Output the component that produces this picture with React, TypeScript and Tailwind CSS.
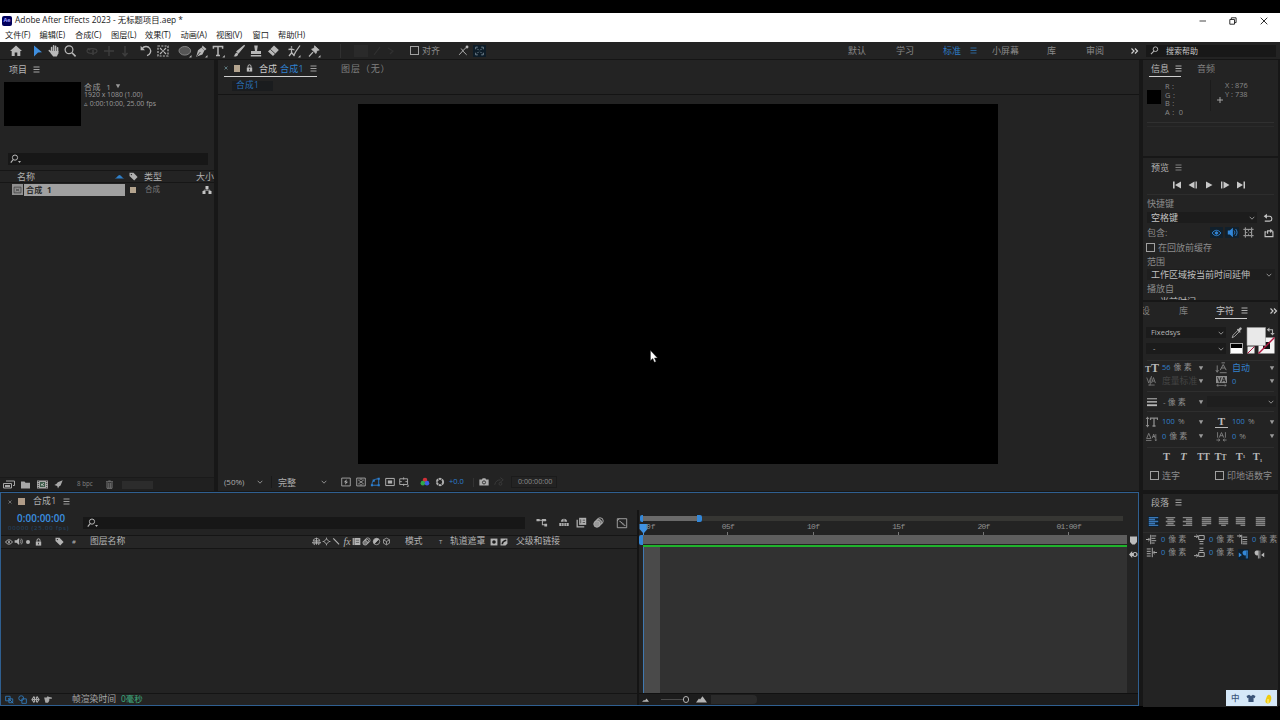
import type { ReactNode } from "react"
import clsx from "clsx"

interface IconProps {
  children: ReactNode
  className?: string
  box?: string
}

function Icon({ children, className = "w-[14px] h-[14px]", box = "0 0 14 14" }: IconProps) {
  return (
    <svg viewBox={box} className={clsx("shrink-0", className)} fill="none" stroke="currentColor" strokeWidth="1.2">
      {children}
    </svg>
  )
}

function Burger({ className }: { className?: string }) {
  return (
    <Icon className={clsx("w-[7px] h-[7px]", className)} box="0 0 7 7">
      <path d="M0.5 1h6M0.5 3.5h6M0.5 6h6" strokeWidth="0.9" />
    </Icon>
  )
}

function Chevron({ className }: { className?: string }) {
  return (
    <Icon className={clsx("w-[6px] h-[6px] text-[#9a9a9a]", className)} box="0 0 6 6">
      <path d="M0.7 1.8 3 4.2 5.3 1.8" strokeWidth="0.9" />
    </Icon>
  )
}

function Caret({ className }: { className?: string }) {
  return (
    <Icon className={clsx("w-[6px] h-[6px] text-[#9a9a9a]", className)} box="0 0 6 6">
      <path d="M0.8 1.2h4.4L3 5.2z" fill="currentColor" stroke="none" />
    </Icon>
  )
}

function Check() {
  return <div className="w-[9px] h-[9px] border border-[#a0a0a0]" />
}

function SearchIcon() {
  return (
    <Icon className="w-[11px] h-[10px] text-[#b5b5b5]" box="0 0 11 10">
      <circle cx="5" cy="3.6" r="2.6" strokeWidth="1" />
      <path d="M3.2 5.5 0.8 8.6" />
      <path d="M8 7h3L9.5 9z" fill="currentColor" stroke="none" />
    </Icon>
  )
}

function Tag({ className }: { className?: string }) {
  return (
    <Icon className={clsx("w-[9px] h-[9px]", className)} box="0 0 9 9">
      <path d="M0.5 0.8h4L8.6 5 5.2 8.6 0.5 4z" fill="currentColor" stroke="none" />
      <circle cx="2.4" cy="2.6" r="0.7" fill="#222" stroke="none" />
    </Icon>
  )
}

function Lock({ className }: { className?: string }) {
  return (
    <Icon className={clsx("w-[7px] h-[8px]", className)} box="0 0 7 8">
      <path d="M0.8 3.6h5.4v4H0.8z" fill="currentColor" stroke="none" />
      <path d="M2 3.8V2.3a1.5 1.5 0 0 1 3 0v1.5" strokeWidth="1" />
      <path d="M3.5 4.8v1.6" stroke="#222" strokeWidth="0.8" />
    </Icon>
  )
}

const MENUS = ["文件(F)", "编辑(E)", "合成(C)", "图层(L)", "效果(T)", "动画(A)", "视图(V)", "窗口", "帮助(H)"]
const MENU_W = ["w-[34.5px]", "w-[35.5px]", "w-[36px]", "w-[34px]", "w-[35.5px]", "w-[35.5px]", "w-[36.5px]", "w-[25.5px]", "w-[34px]"]

function TitleBar() {
  return (
    <div className="h-[29px] bg-white text-[#1a1a1a]">
      <div className="flex h-[15px] items-center">
        <div className="flex w-[10px] h-[10px] ml-[2px] items-center justify-center rounded-[2px] bg-[#00005b] text-[5.5px] font-bold text-[#a8a0ff]">
          Ae
        </div>
        <span className="ml-[3px] w-[1185px] text-[8.35px]">Adobe After Effects 2023 - 无标题项目.aep *</span>
        <Icon className="w-[8px] h-[8px] -ml-px" box="0 0 8 8">
          <path d="M0.5 4h6.5" strokeWidth="0.8" />
        </Icon>
        <Icon className="w-[8px] h-[8px] ml-[22px]" box="0 0 8 8">
          <path d="M0.8 2.5h4.7v4.7H0.8zM2.3 2.3V0.8h4.8v4.8H5.7" strokeWidth="0.9" />
        </Icon>
        <Icon className="w-[8px] h-[8px] ml-[23px]" box="0 0 8 8">
          <path d="M0.7 0.7 7.3 7.3M7.3 0.7 0.7 7.3" strokeWidth="0.9" />
        </Icon>
      </div>
      <div className="flex h-[14px] items-center pl-[5px] text-[8.2px]">
        {MENUS.map((menu, i) => (
          <span key={menu} className={MENU_W[i]}>
            {menu}
          </span>
        ))}
      </div>
    </div>
  )
}

function Toolbar() {
  return (
    <div className="flex h-[18px] items-center border-b border-[#151515] bg-[#232323] text-[9px] text-[#b8b8b8]">
      <Icon className="w-[14px] h-[14px] ml-[9px]">
        <path d="M7 1.5 1 7h1.7v5h3V8.6h2.6V12h3V7H13z" fill="currentColor" stroke="none" />
      </Icon>
      <Icon className="w-[14px] h-[14px] ml-[7px] text-[#3f8fe0]">
        <path d="M4 1.5 12 8.2 8 8.6 4 12.5z" fill="currentColor" stroke="none" />
      </Icon>
      <Icon className="w-[14px] h-[14px] ml-[3px]">
        <path
          d="M4.6 8V3.4M6.6 7V1.8M8.6 7V2.2M10.6 8V3.8M4.8 9 2.3 6.6"
          strokeWidth="1.5"
          strokeLinecap="round"
        />
        <path d="M3.8 7h7.6v2.2L9.8 12.6H6.2L3.8 9.6z" fill="currentColor" stroke="none" />
      </Icon>
      <Icon className="w-[14px] h-[14px] ml-[2px]">
        <circle cx="6" cy="5.8" r="3.9" />
        <path d="m9 8.8 3.6 3.6" strokeWidth="1.6" />
      </Icon>
      <Icon className="w-[14px] h-[14px] ml-[8px] text-[#3e3e3e]">
        <ellipse cx="7" cy="7" rx="5" ry="2.4" />
        <path d="M8 6v5M2.5 4.5 5 6" strokeWidth="1.6" />
      </Icon>
      <Icon className="w-[14px] h-[14px] ml-[3px] text-[#3e3e3e]">
        <path d="M7 2v10M2 7h10" strokeWidth="1.4" />
      </Icon>
      <Icon className="w-[14px] h-[14px] ml-[2px] text-[#3e3e3e]">
        <path d="M7 2v9M4.5 9 7 12l2.5-3" strokeWidth="1.4" />
      </Icon>
      <Icon className="w-[14px] h-[14px] ml-[7px]">
        <path d="M3.2 4.6A4.6 4.6 0 1 1 8 11.6" strokeWidth="1.3" />
        <path d="M1.6 1.8v4.5h4.4z" fill="currentColor" stroke="none" />
      </Icon>
      <Icon className="w-[14px] h-[14px] ml-[3px]">
        <path d="M2 2h10v10H2z" strokeDasharray="2 1.3" />
        <path d="M4 4l2 2M10 4 8 6M4 10l2-2M10 10 8 8" strokeWidth="1.1" />
        <circle cx="7" cy="7" r="1" fill="currentColor" stroke="none" />
      </Icon>
      <Icon className="w-[14px] h-[14px] ml-[8px]">
        <ellipse cx="6.8" cy="6.8" rx="5.8" ry="4.3" fill="#555" stroke="#8a8a8a" strokeWidth="0.9" />
        <path d="M13.5 11v2.5H11z" fill="currentColor" stroke="none" />
      </Icon>
      <Icon className="w-[14px] h-[14px] ml-[2px]">
        <path d="M8.5 1.5 12.5 5l-1.7 1.4-2.9-3zM7.5 3.6 10.4 6.6 8.4 10.6 2.2 12.8 4 6.3z" fill="currentColor" stroke="none" />
        <path d="m3 12 3.4-4" stroke="#232323" strokeWidth="0.8" />
        <path d="M13.5 11v2.5H11z" fill="currentColor" stroke="none" />
      </Icon>
      <Icon className="w-[14px] h-[14px] ml-[3px]">
        <path d="M2.4 4.8V2.4h9.2v2.4M7 2.4v9M5 11.6h4" strokeWidth="1.5" />
        <path d="M13.8 11v2.5h-2.5z" fill="currentColor" stroke="none" />
      </Icon>
      <Icon className="w-[14px] h-[14px] ml-[7px]">
        <path d="M12.6 1.3 6.4 8.8 5 7.6z" fill="currentColor" />
        <path d="M1.5 12.3c1.4-.4 1-2.6 2.6-3.4 1.4-.4 2.4.8 1.8 2-.8 1.5-2.8 1.7-4.4 1.4z" fill="currentColor" stroke="none" />
      </Icon>
      <Icon className="w-[14px] h-[14px] ml-[3px]">
        <path d="M5.2 1.5h3.6L8 7h4v3H2V7h4zM1.8 11h10.4v1.4H1.8z" fill="currentColor" stroke="none" />
      </Icon>
      <Icon className="w-[14px] h-[14px] ml-[3px]">
        <path d="M8 1.5 12.8 6 7 12 2 7.5z" fill="currentColor" stroke="none" />
        <path d="m4.3 5.3 5 4.6" stroke="#232323" strokeWidth="0.8" />
      </Icon>
      <Icon className="w-[14px] h-[14px] ml-[7px]">
        <path d="M13 1.5 8.5 8l-1.5 3M4.5 2.2v1.6M1.5 5.5l3-.5 3 1M4.5 5v4L2 12M4.5 8.5l3 3.5" strokeWidth="1.3" />
        <path d="M13.5 11v2.5H11z" fill="currentColor" stroke="none" />
      </Icon>
      <Icon className="w-[14px] h-[14px] ml-[6px]">
        <path d="M7.6 1.8 12.2 6l-2.2.5-1 3-4.4-4.2 2.6-1z" fill="currentColor" strokeWidth="0.8" />
        <path d="M6 8.2 2 12.5" />
        <path d="M13.5 11v2.5H11z" fill="currentColor" stroke="none" />
      </Icon>
      <div className="ml-[19px] h-[14px] w-px bg-[#303030]" />
      <div className="ml-[13px] h-[12px] w-[14px] bg-[#2a2a2a]" />
      <Icon className="w-[24px] h-[12px] ml-[4px] text-[#303030]" box="0 0 24 12">
        <path d="M2 10 8 2M16 3l5 3-3 3" />
      </Icon>
      <div className="ml-[14px]">
        <Check />
      </div>
      <span className="ml-[3px] w-[36px] text-[#8c8c8c]">对齐</span>
      <Icon className="w-[11px] h-[11px]">
        <path d="m1.5 12.5 4.5-5 5 5M6 7.5l4.5-4.5M4 4.5l2.5 3" strokeWidth="1.2" />
        <circle cx="11.5" cy="2.5" r="1.8" fill="currentColor" stroke="none" />
      </Icon>
      <div className="ml-[4px] w-[13px] h-[12px] bg-[#0d1c28]">
        <Icon className="w-[13px] h-[12px] text-[#7e909c]">
          <path d="M2.5 5V2.5H5M9 2.5h2.5V5M11.5 9v2.5H9M5 11.5H2.5V9M4.5 4.5l1.5 1.5M9.5 4.5 8 6M4.5 9.5 6 8M9.5 9.5 8 8" strokeWidth="1" />
        </Icon>
      </div>
      <div className="flex items-center ml-[362px] text-[#8a8a8a]">
        <span className="w-[48px]">默认</span>
        <span className="w-[47px]">学习</span>
        <span className="w-[27px] text-[#2d7bc4]">标准</span>
        <Burger className="mr-[15px] text-[#2d6ba4]" />
        <span className="w-[55px]">小屏幕</span>
        <span className="w-[39px]">库</span>
        <span className="w-[44px]">审阅</span>
      </div>
      <Icon className="w-[9px] h-[8px] text-[#d0d0d0]" box="0 0 9 8">
        <path d="M1.5 1.5l2.5 2.5-2.5 2.5M5 1.5l2.5 2.5-2.5 2.5" strokeWidth="1.2" />
      </Icon>
      <div className="ml-[7px] flex h-[12px] w-[130px] items-center bg-[#181818] pl-[4px]">
        <Icon className="w-[9px] h-[9px]">
          <circle cx="8.5" cy="5" r="3.6" strokeWidth="1.5" />
          <path d="M6 7.8 1.5 12.5" strokeWidth="1.7" />
        </Icon>
        <span className="ml-[7px] text-[8px] text-[#c4c4c4]">搜索帮助</span>
      </div>
    </div>
  )
}

function ProjectPanel() {
  return (
    <div className="flex w-[214px] flex-col bg-[#232323]">
      <div className="flex h-[18px] items-center pl-[9px] text-[#b4b4b4]">
        <span className="w-[24px] text-[9px]">项目</span>
        <Burger />
      </div>
      <div className="mt-[4px] flex pl-[4px]">
        <div className="h-[44px] w-[77px] bg-black" />
        <div className="ml-[3px] text-[6.95px] leading-[9px] text-[#9a9a9a]">
          <div className="flex h-[8px] items-center">
            <span className="text-[8px] tracking-[0.5px]">合成&nbsp; 1</span>
            <Caret className="ml-[4px]" />
          </div>
          <div>1920 x 1080 (1.00)</div>
          <div>▵ 0:00:10:00, 25.00 fps</div>
        </div>
      </div>
      <div className="mt-[27px] ml-[8px] flex h-[12px] w-[200px] items-center bg-[#171717] pl-[2px]">
        <SearchIcon />
      </div>
      <div className="mt-[5px] flex h-[13px] items-center border-y border-[#161616] pl-[17px] text-[9px] text-[#b0b0b0]">
        <span className="w-[97px]">名称</span>
        <Icon className="w-[11px] h-[5px] text-[#2f7fc8]" box="0 0 11 5">
          <path d="M0.5 4.5C3 4 4 1 5.5 1S8 4 10.5 4.5z" fill="currentColor" stroke="none" />
        </Icon>
        <Tag className="ml-[4px]" />
        <span className="ml-[6px] w-[52px]">类型</span>
        <span>大小</span>
      </div>
      <div className="flex h-[13px] items-center pl-[12px] text-[8px]">
        <div className="flex h-[11px] w-[11px] items-center justify-center bg-[#909090]">
          <Icon className="w-[9px] h-[8px] text-[#333]">
            <path d="M1 2h12v10H1zM4 5l6 4M10 5 4 9" />
          </Icon>
        </div>
        <div className="ml-px flex h-[12px] w-[101px] items-center bg-[#a0a0a0] pl-[2px] font-bold tracking-[0.2px] text-[#2a2a2a]">
          合成&nbsp; 1
        </div>
        <div className="ml-[5px] h-[6px] w-[6px] bg-[#b4a48e]" />
        <span className="ml-[9px] w-[57px] text-[7.5px] text-[#7c7c7c]">合成</span>
        <Icon className="w-[10px] h-[10px] text-[#c4c4c4]" box="0 0 10 10">
          <path d="M3.5 1h3v3h-3zM0.5 6h3v3h-3zM6.5 6h3v3h-3z" fill="currentColor" stroke="none" />
          <path d="M5 4v1.2M2 6V5.2h6V6" strokeWidth="0.8" />
        </Icon>
      </div>
      <div className="flex-1" />
      <div className="flex h-[14px] items-center border-t border-[#1a1a1a] bg-[#202020] pl-[3px] text-[#a8a8a8]">
        <Icon className="w-[12px] h-[9px]" box="0 0 12 9">
          <path d="M0.5 3.5h8v4.5h-8zM3 1h8.5v4.5H10" strokeWidth="1" />
          <path d="M2 5h5v2H2z" fill="currentColor" stroke="none" />
        </Icon>
        <Icon className="ml-[6px] w-[9px] h-[8px]" box="0 0 9 8">
          <path d="M0 0.5h3.5l1 1.3H9v5.7H0z" fill="currentColor" stroke="none" />
        </Icon>
        <Icon className="ml-[7px] w-[11px] h-[9px]" box="0 0 11 9">
          <path d="M0 0.5h11v8H0z" fill="currentColor" stroke="none" />
          <path d="M3 2h5v5H3z" fill="#3a5a48" stroke="none" />
          <path d="M1.3 1v7M9.7 1v7" stroke="#232323" strokeWidth="0.8" strokeDasharray="1 1" />
          <path d="M4 4l3 2M7 3 4 5.5" stroke="#ddd" strokeWidth="0.7" />
        </Icon>
        <Icon className="ml-[6px] w-[9px] h-[9px]" box="0 0 9 9">
          <path d="M8.7 0.3 6.6 5.6 5 6.4 4 8.6 3.2 6 0.4 5l2.2-1.2 1.2-1.6z" fill="currentColor" stroke="none" />
        </Icon>
        <span className="ml-[14px] w-[29px] text-[6.2px] text-[#808080]">8 bpc</span>
        <Icon className="w-[7px] h-[9px] text-[#777]" box="0 0 7 9">
          <path d="M0 1.8h7M2.3 1h2.4M1 2.5v5.8h5V2.5M2.8 3v5M4.3 3v5" strokeWidth="1" />
        </Icon>
        <div className="ml-[9px] h-[8px] w-[31px] bg-[#2c2c2c]" />
      </div>
    </div>
  )
}

function ViewerFooter() {
  return (
    <div className="flex h-[16px] items-center pl-[6px] text-[#adadad]">
      <span className="w-[33px] text-[8px]">(50%)</span>
      <Chevron />
      <div className="ml-[8px] h-[12px] w-px bg-[#191919]" />
      <span className="ml-[6px] w-[43px] text-[9px]">完整</span>
      <Chevron />
      <Icon className="ml-[14px] w-[10px] h-[10px]">
        <path d="M1 1.5h12v11H1z" strokeWidth="1.2" />
        <path d="M8 3 4 7.5h2.5L5.5 11 10 6.5H7.5z" fill="currentColor" stroke="none" />
      </Icon>
      <Icon className="ml-[5px] w-[10px] h-[10px]">
        <path d="M1 1.5h12v11H1z" strokeWidth="1.2" />
        <path d="m3 4 8 6M11 4l-8 6M5 3l4 0M5 11h4" strokeWidth="1.1" />
      </Icon>
      <Icon className="ml-[4px] w-[11px] h-[10px] text-[#2d7fd0]">
        <path d="M2 11.5C2 6 5 2.5 11.5 2.5v9z" strokeWidth="1.3" />
        <path d="M10 1h3v3h-3zM0.5 10h3v3h-3zM10 10h3v3h-3zM3 3.5h3v3H3z" fill="currentColor" stroke="none" />
      </Icon>
      <Icon className="ml-[4px] w-[10px] h-[10px]">
        <path d="M1 2h12v10H1z" strokeWidth="1.4" />
        <path d="M4 4.8h6v4.4H4z" fill="currentColor" stroke="none" />
      </Icon>
      <Icon className="ml-[4px] w-[10px] h-[10px]">
        <path d="M1 2.5h11v8H1zM6.5 0.5v3M6.5 9.5v3M1 6.5h3M9 6.5h3" strokeWidth="1.3" />
        <path d="M13.5 10.5v3h-3z" fill="currentColor" stroke="none" />
      </Icon>
      <Icon className="ml-[11px] w-[10px] h-[10px]">
        <circle cx="7" cy="4.2" r="3.2" fill="#d03038" stroke="none" />
        <circle cx="4" cy="8.6" r="3.2" fill="#2fa848" stroke="none" />
        <circle cx="9.8" cy="8.6" r="3.2" fill="#3c5ee0" stroke="none" />
      </Icon>
      <Icon className="ml-[5px] w-[10px] h-[10px]">
        <circle cx="7" cy="7" r="4.4" strokeWidth="2.8" strokeDasharray="3.8 0.8" />
      </Icon>
      <span className="ml-[4px] w-[24px] text-[7.5px] text-[#2d7fd0]">+0.0</span>
      <div className="h-[9px] w-px bg-[#333]" />
      <Icon className="ml-[5px] w-[10px] h-[10px]">
        <path d="M0.5 3.5h3.6l1-1.8h3.8l1 1.8h3.6v8.5H0.5z" fill="currentColor" stroke="none" />
        <circle cx="7" cy="7.6" r="2.2" stroke="#232323" />
      </Icon>
      <Icon className="ml-[5px] w-[10px] h-[10px] text-[#3d3d3d]">
        <path d="M1 11c1-5 4-7 8-7M9 1l4 3-4 3" />
        <circle cx="9" cy="9.5" r="2" />
      </Icon>
      <div className="ml-[7px] flex h-[12px] w-[46px] items-center border border-[#1b1b1b] pl-[6px] text-[7.2px] text-[#8c8c8c]">
        0:00:00:00
      </div>
    </div>
  )
}

function CompPanel() {
  return (
    <div className="flex w-[921px] flex-col bg-[#232323]">
      <div className="flex h-[17px] pl-[6px] text-[9px]">
        <div className="flex w-[93px] items-center border-b border-[#cfcfcf]">
          <Icon className="w-[4px] h-[4px] text-[#6a8a90]" box="0 0 4 4">
            <path d="M0.5 0.5l3 3M3.5 0.5l-3 3" strokeWidth="0.8" />
          </Icon>
          <div className="ml-[6px] h-[7px] w-[7px] bg-[#b4a48e]" />
          <Lock className="ml-[6px] text-[#bcbcbc]" />
          <span className="ml-[6px] w-[21px] text-[#cacaca]">合成</span>
          <span className="w-[30px] tracking-[0.3px] text-[#2f80d0]">合成1</span>
          <Burger className="text-[#adadad]" />
        </div>
        <div className="ml-[24px] flex items-center tracking-[0.9px] text-[#808080]">图层（无）</div>
      </div>
      <div className="flex h-[18px] items-center border-b border-[#141414] pl-[14px]">
        <div className="flex h-[10px] w-[41px] items-center bg-[#1a1c1e] pl-[4px] text-[8.6px] tracking-[0.4px] text-[#2a6fb4]">合成1</div>
      </div>
      <div className="flex h-[379px] pl-[140px] pt-[9px]">
        <div className="h-[360px] w-[640px] bg-black" />
      </div>
      <ViewerFooter />
    </div>
  )
}

function TimelineHeader() {
  return (
    <div className="flex h-[14px] items-center border-y border-[#151515] bg-[#262626] pb-px pl-[4px] text-[#b4b4b4]">
      <Icon className="w-[8px] h-[8px]">
        <path d="M1 7c3-5 9-5 12 0-3 5-9 5-12 0z" strokeWidth="1.6" />
        <circle cx="7" cy="7" r="1.8" fill="currentColor" stroke="none" />
      </Icon>
      <Icon className="ml-[1px] w-[9px] h-[9px]">
        <path d="M1 5h3l4-3.5v11L4 9H1z" fill="currentColor" stroke="none" />
        <path d="M9.5 4c1.6 2 1.6 4 0 6M11.2 2.5c2.6 3 2.6 6 0 9" />
      </Icon>
      <div className="ml-[3px] h-[4px] w-[4px] rounded-full bg-[#b4b4b4]" />
      <Lock className="ml-[5px]" />
      <Tag className="ml-[13px]" />
      <span className="ml-[8px] w-[18px] text-[6px]">#</span>
      <span className="w-[222px] text-[8.8px]">图层名称</span>
      <Icon className="w-[9px] h-[9px]">
        <path d="M2 6c0-5 10-5 10 0zM1 8h12v1.5H1zM3.5 10v2.5M10.5 10v2.5M7 1v11" strokeWidth="1.4" />
      </Icon>
      <Icon className="ml-[1px] w-[9px] h-[9px]">
        <path d="m7 3 4 4-4 4-4-4zM7 1v2M7 11v2M1 7h2M11 7h2" strokeWidth="1.4" />
      </Icon>
      <Icon className="ml-[1px] w-[9px] h-[9px]">
        <path d="m2 2 9 9.5" strokeWidth="1.7" />
      </Icon>
      <span className="ml-[2px] w-[8px] text-center font-['Liberation_Serif'] text-[10px] italic">fx</span>
      <Icon className="w-[9px] h-[9px] ml-px">
        <path d="M1 1.5h12v11H1z" fill="currentColor" stroke="none" />
        <path d="M3.5 1.5v11M6 5h5M6 8.5h5" stroke="#444" strokeWidth="1" />
      </Icon>
      <Icon className="ml-[1px] w-[9px] h-[9px]">
        <circle cx="9" cy="5" r="3.6" />
        <circle cx="7" cy="7" r="3.6" />
        <circle cx="5" cy="9" r="3.6" fill="#777" />
      </Icon>
      <Icon className="ml-[1px] w-[9px] h-[9px]">
        <circle cx="7" cy="7" r="5" />
        <path d="M3.5 10.5 10.5 3.5A5 5 0 0 0 3.5 10.5z" fill="currentColor" />
      </Icon>
      <Icon className="ml-[1px] w-[9px] h-[9px]">
        <path d="m7 1.8 4.6 2.4v5.4L7 12.2 2.4 9.6V4.2zM2.4 4.4 7 7l4.6-2.6M7 7v5" />
      </Icon>
      <span className="ml-[14px] w-[34px] text-[8.8px]">模式</span>
      <span className="w-[11px] text-[6px]">T</span>
      <span className="w-[40px] text-[8.8px]">轨道遮罩</span>
      <Icon className="w-[8px] h-[8px]">
        <path d="M1 1h12v12H1z" fill="currentColor" stroke="none" />
        <circle cx="7" cy="7" r="3.2" fill="#1c1c1c" stroke="none" />
      </Icon>
      <Icon className="ml-[2px] w-[8px] h-[8px]">
        <path d="M1 1h12v9L9.5 13H1z" fill="currentColor" stroke="none" />
        <path d="M4 11C4 7 7 5 11 4" stroke="#1c1c1c" strokeWidth="3" />
      </Icon>
      <span className="ml-[8px] text-[8.8px]">父级和链接</span>
    </div>
  )
}

const TICKS = ["05f", "10f", "15f", "20f", "01:00f"]

function TimelineTrack() {
  return (
    <div className="flex w-[501px] flex-col border-l-2 border-[#141414]">
      <div className="mt-[5px] flex h-[7px] items-center pl-px">
        <div className="h-[7px] w-[3px] rounded-l-[2px] bg-[#3387d8]" />
        <div className="h-[5px] w-[54px] bg-[#6a6a6a]" />
        <div className="h-[7px] w-[5px] rounded-r-[2px] bg-[#3387d8]" />
        <div className="h-[5px] w-[421px] bg-[#363633]" />
      </div>
      {/* ruler */}
      <div className="flex h-[13px] pl-px font-['Liberation_Mono'] text-[8px] leading-[7px] text-[#909090]">
        <div className="flex w-[45.4px]">
          <Icon className="mt-[1px] -ml-[1px] w-[9px] h-[12px] text-[#3f92e4]" box="0 0 9 12">
            <path d="M0.5 1h8v5L5 10v2H4v-2L0.5 6z" fill="currentColor" stroke="none" />
          </Icon>
          <span className="-ml-[2px] mt-px">0f</span>
        </div>
        {TICKS.map((tick) => (
          <div key={tick} className="flex w-[85.2px] flex-col items-center">
            <span className="mt-px tracking-[-0.7px]">{tick}</span>
            <div className="mt-[2px] h-[3px] w-px bg-[#777]" />
          </div>
        ))}
      </div>
      <div className="flex flex-1">
        <div className="w-[488px]">
          <div className="flex h-[10px] items-start">
            <div className="h-[10px] w-[4px] rounded-l-[2px] bg-[#3387d8]" />
            <div className="h-[9px] w-[484px] bg-[#5e5e5e]" />
          </div>
          <div className="ml-[4px] h-[2px] bg-[#1fb32c]" />
          <div className="ml-[4px] flex h-[146px] border-l border-[#3f78b0] bg-[#313131]">
            <div className="h-full w-[16px] bg-[#4a4a4a]" />
          </div>
        </div>
        <div className="flex flex-col pl-[2px] pt-[1px] text-[#bcbcbc]">
          <Icon className="w-[9px] h-[9px]" box="0 0 9 9">
            <path d="M1 0.5h7v5.5L5.8 8.5H3.2L1 6z" fill="currentColor" stroke="none" />
          </Icon>
          <Icon className="mt-[5px] w-[9px] h-[9px]" box="0 0 9 9">
            <path d="M0 4.5 3.2 1v2h1.5v3H3.2v2z" fill="currentColor" stroke="none" />
            <circle cx="6" cy="4.5" r="2" strokeWidth="1.2" />
          </Icon>
        </div>
      </div>
      <div className="flex h-[13px] items-center border-t border-[#111] bg-[#1c1c1c] pl-[3px] text-[#b4b4b4]">
        <Icon className="w-[7px] h-[4px]" box="0 0 7 4">
          <path d="M0 3.8 2 2l1 .6L4.5.5 7 3.8z" fill="currentColor" stroke="none" />
        </Icon>
        <div className="ml-[12px] h-px w-[22px] bg-[#4a4a4a]" />
        <div className="h-[7px] w-[6px] rounded-full border border-[#b4b4b4]" />
        <Icon className="ml-[7px] w-[11px] h-[7px]" box="0 0 11 7">
          <path d="M0 6.5 3 2.5l1 1L6.5.3 11 6.5z" fill="currentColor" stroke="none" />
        </Icon>
        <div className="ml-[4px] h-[9px] w-[46px] rounded-r-[4px] bg-[#2a2a2a]" />
      </div>
    </div>
  )
}

function Timeline() {
  return (
    <div className="flex h-[214px] w-[1139px] flex-col border border-[#2f5f90] bg-[#232323]">
      <div className="flex h-[17px] items-center pl-[7px] text-[#b0b0b0]">
        <Icon className="w-[4px] h-[4px] text-[#808080]" box="0 0 4 4">
          <path d="M0.5 0.5l3 3M3.5 0.5l-3 3" strokeWidth="0.8" />
        </Icon>
        <div className="ml-[6px] h-[7px] w-[7px] bg-[#b09c88]" />
        <span className="ml-[8px] w-[30px] text-[8.8px] tracking-[0.3px]">合成1</span>
        <Burger />
      </div>
      <div className="flex h-[195px]">
        <div className="flex w-[636px] flex-col">
          <div className="flex h-[25px]">
            <div className="w-[82px] pt-[2px]">
              <div className="pl-[16px] font-['Open_Sans'] text-[9.8px] font-semibold leading-[13px] tracking-[0.1px] text-[#3a90e0]">0:00:00:00</div>
              <div className="pl-[7px] text-[6px] leading-[6px] tracking-[0.8px] text-[#23486a]">00000 (25.00 fps)</div>
            </div>
            <div className="mt-[7px] flex h-[12px] w-[442px] items-center bg-[#171717] pl-[4px]">
              <SearchIcon />
            </div>
            <div className="flex h-[25px] items-center pl-[11px] text-[#b0b0b0]">
              <Icon className="w-[12px] h-[11px]">
                <path d="M0.5 4h6M6.5 4h6M7.5 4v6h5" strokeWidth="1.3" />
                <path d="M0 2.5h4v3H0zM7 2.5h5v3H7zM10 8.5h3.5v3.5H10z" fill="currentColor" stroke="none" />
              </Icon>
              <Icon className="ml-[10px] w-[12px] h-[11px]">
                <path d="M3 6c0-5 8-5 8 0zM1 7.5h12v4H1z" fill="currentColor" stroke="none" />
                <path d="M7 2v10M4 8v3M10 8v3" stroke="#232323" strokeWidth="0.9" />
              </Icon>
              <Icon className="ml-[6px] w-[11px] h-[11px]">
                <path d="M4 1h9v9H4z" fill="currentColor" stroke="none" />
                <path d="M1.5 3.5v9h9" strokeWidth="1.6" />
                <path d="M6 3v5M8.5 4h3M8.5 7h3" stroke="#333" strokeWidth="0.9" />
              </Icon>
              <Icon className="ml-[6px] w-[11px] h-[11px]">
                <circle cx="9" cy="5" r="4" />
                <circle cx="7" cy="7" r="4" fill="#777" />
                <circle cx="5" cy="9" r="4" fill="#999" />
              </Icon>
              <Icon className="ml-[12px] w-[12px] h-[12px]">
                <path d="M1.5 2h11v10.5h-11zM1.5 4.5 4 2" strokeWidth="1" />
                <path d="M4 5c3 0 3 5 7 5M7 6.5l2 2" strokeWidth="1" />
              </Icon>
            </div>
          </div>
          <TimelineHeader />
          <div className="flex-1" />
          <div className="flex h-[12px] items-center border-t border-[#141414] pl-[4px] text-[#a8a8a8]">
            <Icon className="w-[9px] h-[9px] text-[#3078b8]">
              <path d="M1 2h7v7H1zM5 5l8 8M6 6h6v6H6z" strokeWidth="1.4" />
            </Icon>
            <Icon className="ml-[4px] w-[9px] h-[9px] text-[#3078b8]">
              <circle cx="5" cy="5" r="3.8" strokeWidth="1.4" />
              <path d="M6 6h7v7H6z" strokeWidth="1.4" />
            </Icon>
            <Icon className="ml-[4px] w-[9px] h-[9px]">
              <path d="M5 2 1.5 7 5 12M9 2l3.5 5L9 12M5.5 3v8M8.5 3v8M2 7h10" strokeWidth="1.8" />
            </Icon>
            <Icon className="ml-[3px] w-[10px] h-[9px]">
              <path d="M1 4h4l1-2 3 1 4 1v2H9v3l-2 3H3z" fill="currentColor" stroke="none" />
            </Icon>
            <span className="ml-[19px] w-[49px] text-[8.8px]">帧渲染时间</span>
            <span className="text-[8.4px] text-[#3fae80]">0毫秒</span>
          </div>
        </div>
        <TimelineTrack />
      </div>
    </div>
  )
}

function InfoPanel() {
  return (
    <div className="flex h-[96px] flex-col bg-[#232323]">
      <div className="flex h-[17px] pl-[6px] text-[9px]">
        <div className="flex w-[32px] items-center border-b border-[#cfcfcf] pl-[2px] text-[#bcbcbc]">
          <span className="w-[24px]">信息</span>
          <Burger className="w-[6px]" />
        </div>
        <span className="ml-[16px] flex items-center text-[#808080]">音频</span>
      </div>
      <div className="flex h-[45px] items-start pl-[4px] text-[7.4px] leading-[8.7px] text-[#8a8a8a]">
        <div className="mt-[13px] h-[14px] w-[14px] bg-black" />
        <div className="ml-[4px] w-[45px] pt-[5px] tracking-[0.3px]">
          <div>R :</div>
          <div>G :</div>
          <div>B :</div>
          <div>A : &nbsp;0</div>
        </div>
        <div className="mt-[3px] h-[31px] w-px bg-[#1b1b1b]" />
        <Icon className="ml-[6px] mt-[20px] w-[6px] h-[6px] text-[#b0b0b0]" box="0 0 6 6">
          <path d="M3 0v6M0 3h6" strokeWidth="0.9" />
        </Icon>
        <div className="ml-[2px] pt-[4px]">
          <div>X : 876</div>
          <div>Y : 738</div>
        </div>
      </div>
      <div className="mx-[4px] h-px bg-[#303030]" />
      <div className="mx-[4px] mt-[3px] h-px bg-[#2a2a2a]" />
    </div>
  )
}

function PreviewPanel() {
  return (
    <div className="mt-[2px] flex h-[142px] flex-col overflow-hidden bg-[#232323] text-[9px] text-[#8c8c8c] [&>div]:shrink-0">
      <div className="flex h-[18px] items-center pl-[8px] text-[#b4b4b4]">
        <span className="w-[24px]">预览</span>
        <Burger className="w-[6px] text-[#888]" />
      </div>
      <div className="mx-[4px] flex h-[19px] items-center border-b border-[#2d2d2d] pl-[25px] text-[#c8c8c8]">
        <Icon className="w-[10px] h-[8px]" box="0 0 10 8">
          <path d="M1 0.5h1.6v7H1zM9 0.5v7L3 4z" fill="currentColor" stroke="none" />
        </Icon>
        <Icon className="ml-[6px] w-[10px] h-[8px]" box="0 0 10 8">
          <path d="M7.5 0.5h1.4v7H7.5zM6.5 0.5v7L0.5 4z" fill="currentColor" stroke="none" />
        </Icon>
        <Icon className="ml-[6px] w-[10px] h-[8px]" box="0 0 10 8">
          <path d="M2 0.5v7L8.5 4z" fill="currentColor" stroke="none" />
        </Icon>
        <Icon className="ml-[6px] w-[10px] h-[8px]" box="0 0 10 8">
          <path d="M1 0.5h1.4v7H1zM3.5 0.5v7l6-3.5z" fill="currentColor" stroke="none" />
        </Icon>
        <Icon className="ml-[6px] w-[10px] h-[8px]" box="0 0 10 8">
          <path d="M7.5 0.5H9v7H7.5zM1 0.5v7L7 4z" fill="currentColor" stroke="none" />
        </Icon>
      </div>
      <div className="flex h-[16px] items-center pl-[4px]">快捷键</div>
      <div className="flex h-[13px] items-center pl-[4px] text-[#c4c4c4]">
        <div className="flex h-[11px] w-[110px] items-center bg-[#1c1c1c] pl-[4px]">
          <span className="w-[98px]">空格键</span>
          <Chevron />
        </div>
        <Icon className="ml-[6px] w-[10px] h-[10px]">
          <path d="M4 4.5h5a3.3 3.3 0 0 1 0 6.8H2.5" strokeWidth="1.6" />
          <path d="M5.5 1v7L1 4.5z" fill="currentColor" stroke="none" />
        </Icon>
      </div>
      <div className="flex h-[17px] items-center pl-[4px]">
        <span className="w-[63px]">包含:</span>
        <div className="flex h-[11px] w-[13px] items-center justify-center bg-[#11202c] text-[#3387d8]">
          <Icon className="w-[11px] h-[10px]">
            <path d="M1 7c3-5 9-5 12 0-3 5-9 5-12 0z" strokeWidth="1.3" />
            <circle cx="7" cy="7" r="1.8" fill="currentColor" />
          </Icon>
        </div>
        <div className="ml-[2px] flex h-[11px] w-[14px] items-center justify-center bg-[#11202c] text-[#3387d8]">
          <Icon className="w-[13px] h-[11px]">
            <path d="M1 4.5h2.5L7.5 1v12L3.5 9.5H1z" fill="currentColor" stroke="none" />
            <path d="M9 4.5c1.2 1.6 1.2 3.4 0 5M11 2.5c2.4 3 2.4 6 0 9" />
          </Icon>
        </div>
        <Icon className="ml-[4px] w-[11px] h-[11px] text-[#b4b4b4]">
          <path d="M3 3h8v8H3zM3 0.5v2M11 0.5v2M3 11.5v2M11 11.5v2M0.5 3h2M0.5 11h2M11.5 3h2M11.5 11h2" strokeWidth="1.2" />
          <path d="M7 4v1.5M7 8.5V10M4 7h1.5M8.5 7H10" strokeWidth="1" />
        </Icon>
        <Icon className="ml-[10px] w-[10px] h-[10px] text-[#c0c0c0]">
          <path d="M3.5 5.5H1.5v6.5h11V5.5H11M5 8V4h5" strokeWidth="1.6" />
          <path d="M8.5 1v6L12.5 4z" fill="currentColor" stroke="none" />
        </Icon>
      </div>
      <div className="flex h-[13px] items-center pl-[3px]">
        <Check />
        <span className="ml-[3px]">在回放前缓存</span>
      </div>
      <div className="flex h-[14px] items-center pl-[4px]">范围</div>
      <div className="flex h-[13px] items-center pl-[4px]">
        <div className="flex h-[11px] w-[128px] items-center bg-[#1e1e1e] pl-[4px] text-[#c0c0c0]">
          <span className="w-[115px]">工作区域按当前时间延伸</span>
          <Chevron />
        </div>
      </div>
      <div className="flex h-[14px] items-center pl-[4px]">播放自</div>
      <div className="ml-[17px] mt-[2px] h-[9px] leading-[9px] text-[#c0c0c0]">当前时间</div>
    </div>
  )
}

function CharRow({ icons, left, right, className }: { icons: [ReactNode, ReactNode]; left: ReactNode; right: ReactNode; className: string }) {
  return (
    <div className={clsx("flex items-center pl-[2px] text-[8px] text-[#8c8c8c]", className)}>
      {icons[0]}
      <div className="ml-[4px] w-[36px]">{left}</div>
      <Caret />
      <div className="ml-[11px] flex items-center">{icons[1]}</div>
      <div className="ml-[4px] w-[37px] whitespace-nowrap">{right}</div>
      <Caret />
    </div>
  )
}

function Num({ children }: { children: ReactNode }) {
  return <span className="mr-[3px] text-[7.5px] text-[#3280cc]">{children}</span>
}

function Glyph({ children, className }: { children: ReactNode; className?: string }) {
  return <span className={clsx("block w-[13px] text-center font-['Liberation_Serif'] font-bold leading-none text-[#b8b8b8]", className)}>{children}</span>
}

function CharacterPanel() {
  return (
    <div className="mt-[2px] flex h-[188px] flex-col bg-[#232323] text-[#b0b0b0] [&>div]:shrink-0">
      <div className="flex h-[17px] overflow-hidden text-[9px]">
        <span className="-ml-[2px] flex w-[38px] items-center text-[#808080]">设</span>
        <span className="flex w-[36px] items-center text-[#808080]">库</span>
        <div className="flex w-[32px] items-center border-b border-[#cfcfcf] pl-px text-[#c0c0c0]">
          <span className="w-[25px]">字符</span>
          <Burger className="w-[6px]" />
        </div>
        <Icon className="ml-[22px] mt-[5px] w-[9px] h-[8px] text-[#c8c8c8]" box="0 0 9 8">
          <path d="M1.5 1.5l2.5 2.5-2.5 2.5M5 1.5l2.5 2.5-2.5 2.5" strokeWidth="1.2" />
        </Icon>
      </div>
      <div className="flex h-[41px] pl-[3px] pt-[8px]">
        <div className="w-[80px] text-[7.5px]">
          <div className="flex h-[11px] items-center bg-[#1b1b1b] pl-[5px] text-[#b4b4b4]">
            <span className="w-[67px]">Fixedsys</span>
            <Chevron />
          </div>
          <div className="mt-[5px] flex h-[11px] items-center bg-[#1b1b1b] pl-[7px]">
            <span className="w-[65px]">-</span>
            <Chevron />
          </div>
        </div>
        <div className="ml-[4px] w-[13px]">
          <Icon className="w-[13px] h-[12px]">
            <path d="m2 12.5 1-3L8.5 4l1.6 1.6L4.8 11z" strokeWidth="1" />
            <path d="M7.5 3.2 11 6.6l.9-.9-1-1 1.8-1.9a1.4 1.4 0 0 0-2-2L9 2.7l-.8-.7z" fill="currentColor" stroke="none" />
          </Icon>
          <div className="mt-[4px] h-[11px] border border-[#aaa]">
            <div className="h-[4px] bg-black" />
            <div className="h-[5px] bg-white" />
          </div>
        </div>
        <Icon className="ml-[3px] w-[30px] h-[28px]" box="0 0 30 28">
          <path d="M12.5 10.5h16v16h-16z" fill="#f4f4f4" stroke="none" />
          <path d="M17 15h7v7h-7z" fill="#111" stroke="none" />
          <path d="m12.5 26.5 16-16" stroke="#b01840" strokeWidth="1.5" />
          <path d="M1.5 19.5h7v7h-7z" fill="#eee" stroke="none" />
          <path d="m1.5 26.5 7-7" stroke="#b01840" strokeWidth="1" />
          <path d="M1 0.5h18.5v18H1z" fill="#e9e9e9" stroke="#999" strokeWidth="0.6" />
          <path d="M23 2.8h3.5v4" strokeWidth="1.1" />
          <path d="M23.4 0.6v4.4L20.8 2.8zM24.3 6h4.4l-2.2 2.6z" fill="currentColor" stroke="none" />
        </Icon>
      </div>
      <div className="mx-[4px] h-px bg-[#2e2e2e]" />
      <CharRow
        className="h-[13px]"
        icons={[<Glyph className="text-[12px]"><span className="text-[9px]">T</span>T</Glyph>, <Icon className="w-[13px] h-[12px]"><path d="M2 11V4M0.5 9.5 2 12l1.5-2.5M5 12.5h8M5.5 9.5 9 3l3.5 6.5M7 7h4M7 1h4" strokeWidth="1" /></Icon>]}
        left={<span><Num>56</Num>像 素</span>}
        right={<span className="text-[9px] text-[#3280cc]">自动</span>}
      />
      <CharRow
        className="h-[14px]"
        icons={[<Icon className="w-[13px] h-[11px]"><path d="M1 2l2.5 7L6 2M7 9l2.5-7L12 9M8 6.5h3M7 0 5 12M3 11.5h8" strokeWidth="0.9" /></Icon>, <Icon className="w-[13px] h-[11px]"><path d="M0 0h14v9H0z" fill="currentColor" stroke="none" /><path d="M2 1.5 4.2 8 6.5 1.5M7.5 8 10 1.5 12.4 8M8.5 6h3" stroke="#222" /><path d="M1 12h12M3 10.5 1 12l2 1.5M11 10.5l2 1.5-2 1.5" strokeWidth="0.9" /></Icon>]}
        left={<span className="text-[8.8px] text-[#444]">度量标准</span>}
        right={<Num>0</Num>}
      />
      <div className="mx-[4px] mt-[3px] h-px bg-[#2e2e2e]" />
      <div className="flex h-[19px] items-center pl-[4px] text-[8px] text-[#8c8c8c]">
        <Icon className="w-[10px] h-[10px] text-[#b8b8b8]">
          <path d="M0 2.5h14" strokeWidth="1.4" />
          <path d="M0 6.8h14" strokeWidth="2" />
          <path d="M0 11.5h14" strokeWidth="2.6" />
        </Icon>
        <span className="ml-[6px] w-[35px]">- 像 素</span>
        <Caret />
        <div className="ml-[3px] flex h-[11px] w-[69px] items-center justify-end bg-[#1e1e1e] pr-[2px]">
          <Chevron />
        </div>
      </div>
      <div className="mx-[4px] h-px bg-[#2e2e2e]" />
      <CharRow
        className="mt-[2px] h-[15px]"
        icons={[<Icon className="w-[13px] h-[12px]" box="0 0 13 12"><path d="M2.5 2v8" strokeWidth="1" /><path d="M2.5 0.5 4.3 3H0.7zM2.5 11.5 4.3 9H0.7z" fill="currentColor" stroke="none" /><path d="M5.5 4V2.2h7V4M9 2.2v7.6M7.5 10h3" strokeWidth="1.3" /></Icon>, <Glyph className="border-b border-[#b8b8b8] text-[11px]">T</Glyph>]}
        left={<span><Num>100</Num>%</span>}
        right={<span><Num>100</Num>%</span>}
      />
      <CharRow
        className="h-[14px]"
        icons={[<Icon className="w-[13px] h-[11px]"><path d="M0.8 9.5 3.5 3l2.7 6.5zM0 12h7M8 9l1.8-5 1.8 5M8.5 7h2.6M12.5 4v8M11.5 11l1 1.5 1-1.5" strokeWidth="1" /></Icon>, <Icon className="w-[13px] h-[11px]"><path d="M4 8.5 7 2l3 6.5M5 6h4M2 1.5v7M12 1.5v7M0.5 11.5h4M13.5 11.5h-4M3 10l2 1.5L3 13M11 10l-2 1.5 2 1.5" strokeWidth="1" /></Icon>]}
        left={<span><Num>0</Num>像 素</span>}
        right={<span><Num>0</Num>%</span>}
      />
      <div className="mx-[4px] mt-[4px] h-px bg-[#2e2e2e]" />
      <div className="flex h-[19px] items-center pl-[17px] text-[10.5px]">
        <Glyph className="font-black">T</Glyph>
        <Glyph className="ml-[4px] italic">T</Glyph>
        <Glyph className="ml-[7px] text-[9.5px]">TT</Glyph>
        <Glyph className="ml-[4px]">T<span className="text-[7.5px]">T</span></Glyph>
        <Glyph className="ml-[7px]">T<sup className="text-[5px]">1</sup></Glyph>
        <Glyph className="ml-[4px]">T<sub className="text-[5px]">1</sub></Glyph>
      </div>
      <div className="flex h-[17px] items-center pl-[7px] text-[9px] text-[#8c8c8c]">
        <Check />
        <span className="ml-[3px] w-[53px]">连字</span>
        <Check />
        <span className="ml-[3px]">印地语数字</span>
      </div>
    </div>
  )
}

const ALIGNS = [
  { d: "M1 2h12M1 4.5h8M1 7h12M1 9.5h8M1 12h12", cls: "ml-[5px]" },
  { d: "M1 2h12M3 4.5h8M1 7h12M3 9.5h8M1 12h12", cls: "ml-[6px]" },
  { d: "M1 2h12M5 4.5h8M1 7h12M5 9.5h8M1 12h12", cls: "ml-[6px]" },
  { d: "M1 2h12M1 4.5h12M1 7h12M1 9.5h12M1 12h6", cls: "ml-[8px]" },
  { d: "M1 2h12M1 4.5h12M1 7h12M1 9.5h12M4 12h6", cls: "ml-[6px]" },
  { d: "M1 2h12M1 4.5h12M1 7h12M1 9.5h12M7 12h6", cls: "ml-[6px]" },
  { d: "M1 2h12M1 4.5h12M1 7h12M1 9.5h12M1 12h12", cls: "ml-[9px]" },
]

function Indent({ d }: { d: string }) {
  return (
    <Icon className="w-[11px] h-[11px] text-[#b0b0b0]">
      <path d={d} strokeWidth="1.2" />
    </Icon>
  )
}

function ParagraphPanel() {
  return (
    <div className="mt-[3px] flex h-[213px] flex-col bg-[#232323] text-[#b0b0b0]">
      <div className="flex h-[17px] items-center pl-[8px] text-[9px]">
        <span className="w-[24px]">段落</span>
        <Burger />
      </div>
      <div className="mr-[4px] flex h-[22px] items-center border-b border-[#2d2d2d] pb-px">
        {ALIGNS.map((align, i) => (
          <Icon
            key={align.d}
            className={clsx("w-[11px] h-[11px]", align.cls, i === 0 ? "bg-[#10202e] text-[#3a78b8]" : "text-[#858585]")}
          >
            <path d={align.d} strokeWidth="1.7" />
          </Icon>
        ))}
      </div>
      <div className="flex h-[13px] items-center pl-[3px] text-[8px] text-[#8c8c8c]">
        <Indent d="M0 7h4M3 5l2 2-2 2M6 1v12M7 2.5h6M7 5.5h5M7 8.5h6M7 11.5h4" />
        <span className="ml-[4px] w-[33px]"><Num>0</Num>像 素</span>
        <Indent d="M0 3h5M3 1l2 2-2 2M6 2h7v5H6zM7 9.5h5M7 12.5h5" />
        <span className="ml-[4px] w-[28px]"><Num>0</Num>像 素</span>
        <Indent d="M0 2.5h5M3 1l2 1.5-2 1.5M6 1v12M7 4h6M7 7h6M7 10h6M7 12.5h6" />
        <span className="ml-[4px]"><Num>0</Num>像 素</span>
      </div>
      <div className="flex h-[12px] items-center pl-[3px] text-[8px] text-[#8c8c8c]">
        <Indent d="M1 2.5h5M1 5.5h5M1 8.5h5M1 11.5h5M8 1v12M14 7h-4M11 5 9 7l2 2" />
        <span className="ml-[4px] w-[33px]"><Num>0</Num>像 素</span>
        <Indent d="M0 11h5M3 9l2 2-2 2M7 1.5h5M7 4.5h5M6 7h7v5H6z" />
        <span className="ml-[4px] w-[29px]"><Num>0</Num>像 素</span>
        <Icon className="mt-[4px] w-[11px] h-[11px] bg-[#10202e] text-[#3387d8]">
          <path d="M1 4.5v6l4-3zM8 2h4v1h-1v9h-1V8a3 3 0 0 1-2-6z" fill="currentColor" stroke="none" />
          <path d="M12 2v10" strokeWidth="1" />
        </Icon>
        <Icon className="ml-[5px] mt-[4px] w-[11px] h-[11px] text-[#b8b8b8]">
          <path d="M13 4.5v6l-4-3zM3 2h3v10H5V8a3 3 0 0 1-2-6z" fill="currentColor" stroke="none" />
          <path d="M7.5 2v10" strokeWidth="1" />
        </Icon>
      </div>
      <div className="flex-1" />
      <div className="ml-[83px] mb-px flex h-[16px] w-[51px] items-center bg-[#d5e8f8] pl-[5px] text-[8.5px] font-medium text-[#3a5478]">
        <span className="w-[15px]">中</span>
        <Icon className="w-[10px] h-[9px]">
          <path d="M0 3 4 1l3 2 3-2 4 2-1.5 3.5L11 6v6.5H3V6l-1.5.5z" fill="currentColor" stroke="none" />
        </Icon>
        <Icon className="ml-[8px] w-[8px] h-[12px]" box="0 0 8 12">
          <path d="M4 3c2-1 3.6 1 3.2 4-.2 3-1.6 4.4-3.4 4.4S.8 10 1.6 8C2.6 6 2.4 4 4 3z" fill="#f0cc10" stroke="none" />
          <path d="M4 7v4" stroke="#fff4a0" strokeWidth="1" />
        </Icon>
      </div>
    </div>
  )
}

export default function App() {
  return (
    <div className="relative flex h-[720px] w-[1280px] flex-col overflow-hidden whitespace-nowrap bg-black pt-[13px] font-['Open_Sans','Noto_Sans_CJK_SC',sans-serif] leading-none [&_span]:shrink-0">
      <TitleBar />
      <Toolbar />
      <div className="flex h-[646px] bg-[#171717]">
        <div className="w-[1139px]">
          <div className="flex h-[431px]">
            <ProjectPanel />
            <div className="w-[4px]" />
            <CompPanel />
          </div>
          <div className="h-px" />
          <Timeline />
        </div>
        <div className="ml-[4px] w-[135px]">
          <InfoPanel />
          <PreviewPanel />
          <CharacterPanel />
          <div className="h-px" />
          <ParagraphPanel />
        </div>
      </div>
      {/* mouse pointer */}
      <Icon className="absolute left-[650px] top-[350px] w-[8px] h-[13px]" box="0 0 8 13">
        <path d="M0.5 0.5v10l2.3-2.1 1.6 3.8 1.6-.7L4.4 7.9h3z" fill="#fff" stroke="#333" strokeWidth="0.4" />
      </Icon>
    </div>
  )
}
